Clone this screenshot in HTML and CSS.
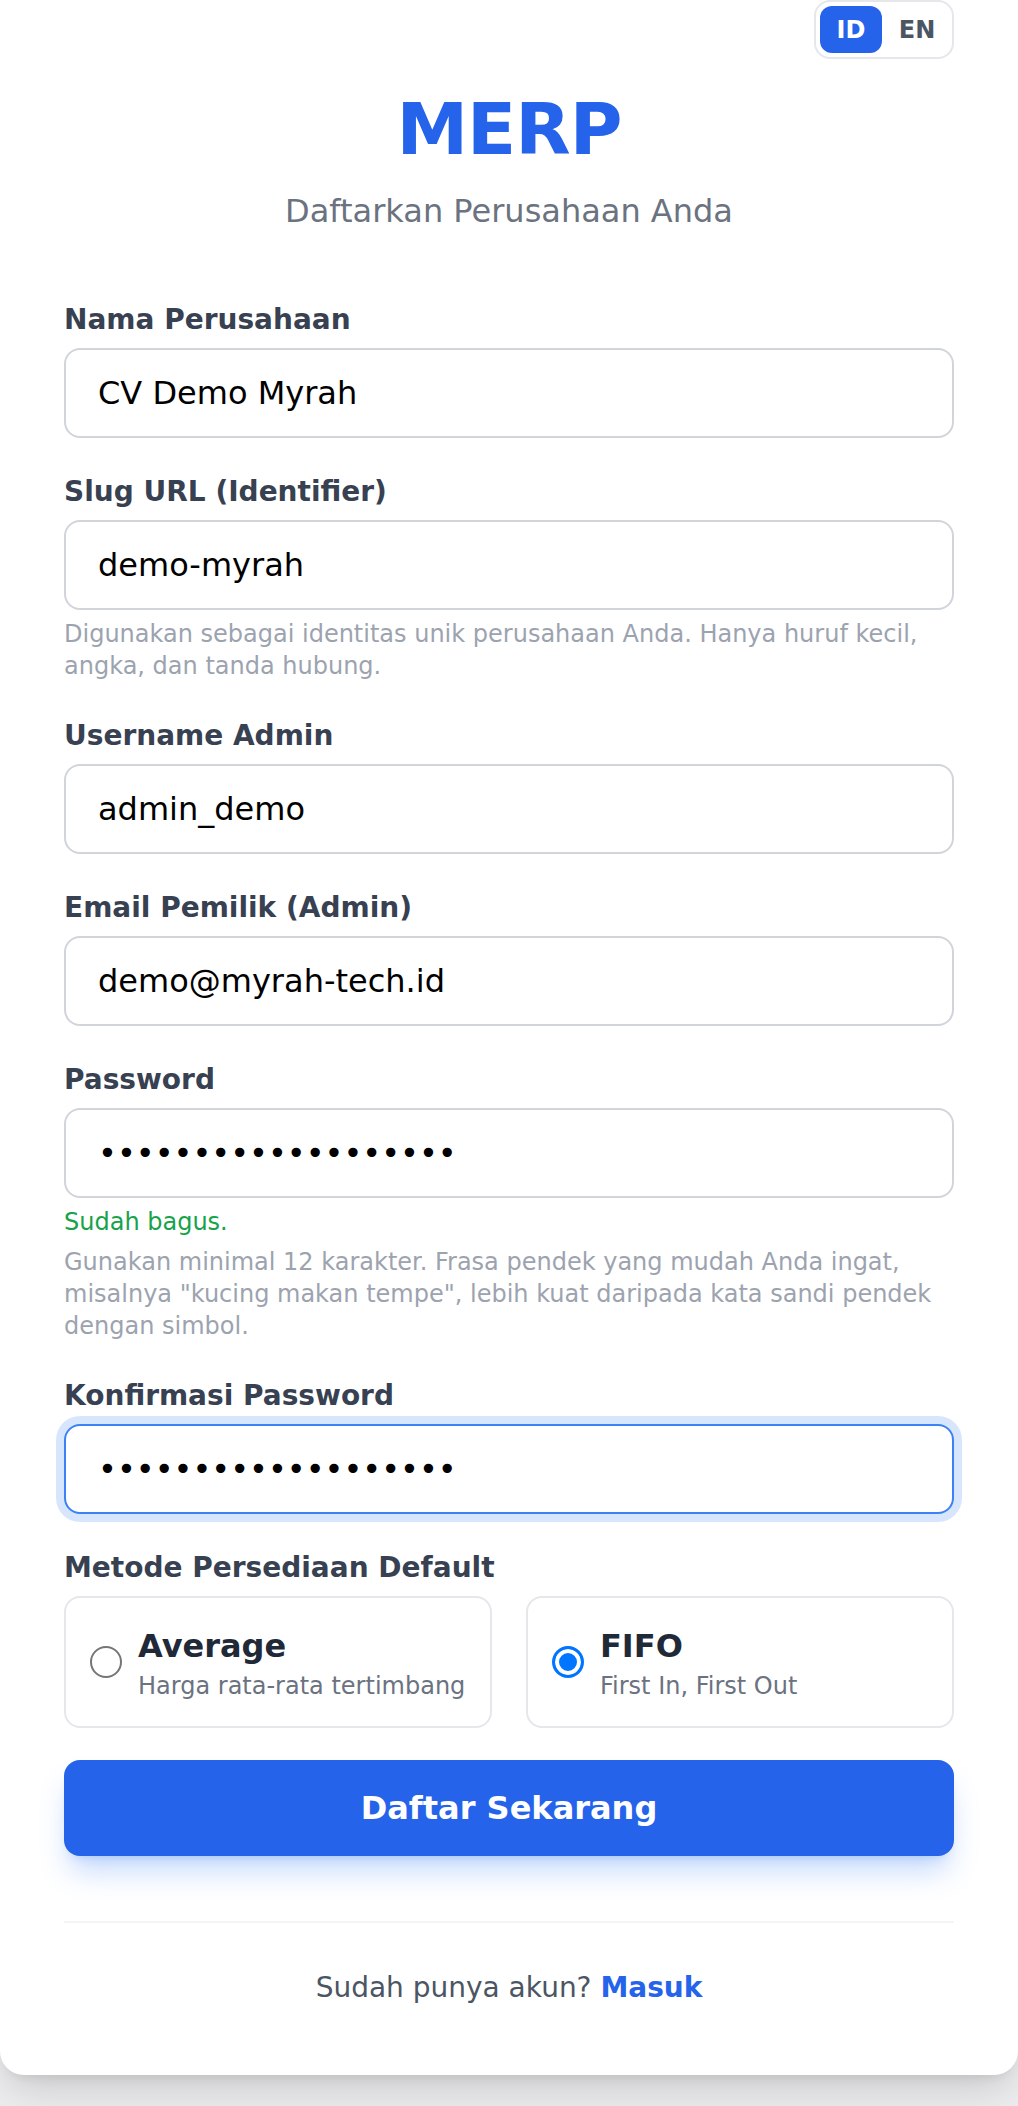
FILE: index.html
```html
<!DOCTYPE html>
<html lang="id">
<head>
<meta charset="utf-8">
<title>MERP - Daftar</title>
<link rel="stylesheet" href="styles.css">
</head>
<body>
<main class="card">
  <div class="lang-row">
    <div class="lang">
      <span class="lang-btn active">ID</span>
      <span class="lang-btn">EN</span>
    </div>
  </div>
  <h1 class="brand">MERP</h1>
  <p class="tagline">Daftarkan Perusahaan Anda</p>

  <form class="form">
    <div class="field">
      <label class="label">Nama Perusahaan</label>
      <input class="input" type="text" value="CV Demo Myrah">
    </div>
    <div class="field">
      <label class="label">Slug URL (Identifier)</label>
      <input class="input" type="text" value="demo-myrah">
      <p class="hint">Digunakan sebagai identitas unik perusahaan Anda. Hanya huruf kecil, angka, dan tanda hubung.</p>
    </div>
    <div class="field">
      <label class="label">Username Admin</label>
      <input class="input" type="text" value="admin_demo">
    </div>
    <div class="field">
      <label class="label">Email Pemilik (Admin)</label>
      <input class="input" type="email" value="demo@myrah-tech.id">
    </div>
    <div class="field">
      <label class="label">Password</label>
      <input class="input" type="password" value="abcdefghijklmnopqrs">
      <p class="ok">Sudah bagus.</p>
      <p class="hint">Gunakan minimal 12 karakter. Frasa pendek yang mudah Anda ingat, misalnya "kucing makan tempe", lebih kuat daripada kata sandi pendek dengan simbol.</p>
    </div>
    <div class="field">
      <label class="label">Konfirmasi Password</label>
      <input class="input focused" type="password" value="abcdefghijklmnopqrs">
    </div>
    <div class="field">
      <label class="label">Metode Persediaan Default</label>
      <div class="methods">
        <div class="method">
          <span class="radio"></span>
          <div class="method-text">
            <div class="method-title">Average</div>
            <div class="method-desc">Harga rata-rata tertimbang</div>
          </div>
        </div>
        <div class="method">
          <span class="radio checked"></span>
          <div class="method-text">
            <div class="method-title">FIFO</div>
            <div class="method-desc">First In, First Out</div>
          </div>
        </div>
      </div>
    </div>
    <button class="submit" type="button">Daftar Sekarang</button>
  </form>

  <div class="divider"></div>
  <p class="footer">Sudah punya akun? <a class="link" href="#">Masuk</a></p>
</main>
</body>
</html>
```

FILE: styles.css
```css
* { box-sizing: border-box; }
html, body { margin: 0; padding: 0; }
body {
  background: #ededef;
  font-family: "DejaVu Sans", sans-serif;
  min-height: 2106px;
}
.card {
  width: 1018px;
  background: #fff;
  border-radius: 0 0 24px 24px;
  padding: 0 64px 67px 64px;
  box-shadow: 0 20px 40px -8px rgba(0, 0, 0, 0.16), 0 8px 12px -6px rgba(0, 0, 0, 0.08);
}
.lang-row { display: flex; justify-content: flex-end; }
.lang {
  display: flex;
  gap: 4px;
  padding: 4px;
  border: 2px solid #e5e7eb;
  border-radius: 16px;
  background: #fff;
}
.lang-btn {
  width: 62px;
  height: 47px;
  border-radius: 12px;
  font-size: 24px;
  font-weight: 700;
  color: #4b5563;
  display: flex;
  align-items: center;
  justify-content: center;
}
.lang-btn.active { background: #2563eb; color: #fff; }
.brand {
  margin: 30px 0 0;
  text-align: center;
  font-size: 72px;
  line-height: 80px;
  font-weight: 700;
  color: #2563eb;
  letter-spacing: -1px;
}
.tagline {
  margin: 18px 0 0;
  text-align: center;
  font-size: 32px;
  line-height: 48px;
  color: #6b7280;
}
.form {
  margin-top: 65px;
  display: flex;
  flex-direction: column;
  gap: 34px;
}
.label {
  display: block;
  font-size: 28px;
  line-height: 40px;
  font-weight: 700;
  color: #374151;
  margin-bottom: 8px;
}
.input {
  display: block;
  width: 100%;
  height: 90px;
  margin: 0;
  padding: 0 32px;
  border: 2px solid #d1d5db;
  border-radius: 16px;
  font-family: "DejaVu Sans", sans-serif;
  font-size: 32px;
  line-height: 48px;
  color: #000;
  background: #fff;
  outline: none;
}
.input.focused {
  border-color: #3b82f6;
  box-shadow: 0 0 0 8px rgba(59, 130, 246, 0.2);
}
.hint, .ok {
  margin: 8px 0 0;
  font-size: 24px;
  line-height: 32px;
}
.hint { color: #9ca3af; }
.ok { color: #16a34a; }
.methods {
  display: grid;
  grid-template-columns: 1fr 1fr;
  gap: 34px;
}
.method {
  display: flex;
  align-items: center;
  gap: 16px;
  padding: 24px;
  border: 2px solid #e5e7eb;
  border-radius: 16px;
}
.radio {
  flex: none;
  width: 32px;
  height: 32px;
  border-radius: 50%;
  border: 2px solid #767676;
  background: #fff;
}
.radio.checked {
  border: 3px solid #0075ff;
  background: #0075ff;
  box-shadow: inset 0 0 0 4px #fff;
}
.method-title {
  font-size: 32px;
  line-height: 48px;
  font-weight: 700;
  color: #1f2937;
}
.method-desc {
  font-size: 24px;
  line-height: 32px;
  color: #6b7280;
}
.submit {
  display: block;
  width: 100%;
  height: 96px;
  margin-top: -2px;
  border: 0;
  border-radius: 16px;
  background: #2563eb;
  color: #fff;
  font-family: "DejaVu Sans", sans-serif;
  font-size: 32px;
  font-weight: 700;
  box-shadow: 0 20px 30px -6px rgba(59, 130, 246, 0.3), 0 8px 12px -8px rgba(59, 130, 246, 0.3);
}
.divider {
  margin-top: 65px;
  height: 2px;
  background: #f3f4f6;
}
.footer {
  margin: 0;
  padding-top: 45px;
  text-align: center;
  font-size: 28px;
  line-height: 40px;
  color: #4b5563;
}
.link {
  color: #2563eb;
  font-weight: 700;
  text-decoration: none;
}
```
